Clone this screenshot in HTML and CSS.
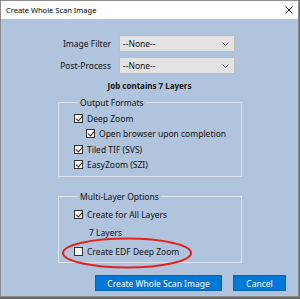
FILE: index.html
```html
<!DOCTYPE html>
<html>
<head>
<meta charset="utf-8">
<link rel="stylesheet" href="styles.css">
</head>
<body>
<div class="window">
  <div class="titlebar">
    <span class="title">Create Whole Scan Image</span>
    <svg class="close" width="8" height="8" viewBox="0 0 8 8"><path d="M0.5 0.5 L7.5 7.5 M7.5 0.5 L0.5 7.5" stroke="#222" stroke-width="1"/></svg>
  </div>
  <div class="content">
    <div class="form">
      <label class="lbl">Image Filter</label>
      <div class="select"><span>--None--</span><svg width="7" height="4" viewBox="0 0 7 4"><path d="M0.5 0.5 L3.5 3.5 L6.5 0.5" fill="none" stroke="#666" stroke-width="1"/></svg></div>
      <label class="lbl">Post-Process</label>
      <div class="select"><span>--None--</span><svg width="7" height="4" viewBox="0 0 7 4"><path d="M0.5 0.5 L3.5 3.5 L6.5 0.5" fill="none" stroke="#666" stroke-width="1"/></svg></div>
    </div>
    <div class="job">Job contains 7 Layers</div>
    <fieldset class="group g1">
      <legend>Output Formats</legend>
      <div class="check"><span class="box on"></span>Deep Zoom</div>
      <div class="check sub"><span class="box on"></span>Open browser upon completion</div>
      <div class="check"><span class="box on"></span>Tiled TIF (SVS)</div>
      <div class="check"><span class="box on"></span>EasyZoom (SZI)</div>
    </fieldset>
    <fieldset class="group g2">
      <legend>Multi-Layer Options</legend>
      <div class="check tall"><span class="box on"></span>Create for All Layers</div>
      <div class="layers">7 Layers</div>
      <div class="check tall"><span class="box"></span>Create EDF Deep Zoom</div>
    </fieldset>
    <div class="buttons">
      <div class="btn primary">Create Whole Scan Image</div>
      <div class="btn cancel">Cancel</div>
    </div>
    <svg class="ring" width="134" height="34" viewBox="0 0 134 34"><ellipse cx="67" cy="17" rx="64" ry="14.5" fill="none" stroke="#e3201b" stroke-width="2"/></svg>
  </div>
</div>
</body>
</html>
```
FILE: styles.css
```css
* { box-sizing: border-box; }
html, body { margin: 0; padding: 0; }
body {
  width: 300px; height: 299px;
  background: #6b6b6b;
  font-family: "Noto Sans", "Open Sans", sans-serif;
  font-size: 8.5px;
  color: #111;
  overflow: hidden;
}
.window {
  width: 299px; height: 297px;
  border: 1px solid #8c8c8c;
  background: #b0c4de;
  display: flex; flex-direction: column;
}
.titlebar {
  height: 18px; background: #fff;
  display: flex; align-items: center; justify-content: space-between;
  padding: 0 5px 0 5px;
  flex-shrink: 0;
}
.title { font-size: 7.5px; color: #000; }
.form {
  display: grid;
  grid-template-columns: 103px 116px;
  column-gap: 8px; row-gap: 5px;
  margin: 16px 0 0 7px;
  align-items: center;
}
.content { position: relative; flex: 1; display: flex; flex-direction: column; }
.lbl { text-align: right; font-size: 8.5px; }
.select {
  height: 17px;
  background: #e3e3e3;
  border: 1px solid #bdbdbd;
  display: flex; align-items: center; justify-content: space-between;
  padding: 0 5px 0 3px;
  font-size: 8.5px;
}
.job { text-align: center; font-weight: bold; margin-top: 5px; height: 13px; line-height: 13px; font-size: 8px; }
.group {
  margin: 0 0 0 57px; width: 184px;
  border: 1px solid #dbe3ee;
  padding: 0 0 0 15px;
}
.group legend { padding: 0 2px; margin-left: 4px; font-size: 8.5px; line-height: 11px; }
.g1 { margin-top: 5px; height: 80px; padding-top: 3px; }
.g2 { margin-top: 14px; height: 72px; padding-top: 4px; }
.check { display: flex; align-items: center; height: 15.3px; font-size: 8.5px; }
.check.tall { height: 17px; }
.check.sub { padding-left: 12px; }
.box {
  width: 9px; height: 9px; border: 1px solid #333; background: #fff;
  margin-right: 4px; position: relative; flex-shrink: 0;
}
.box.on::after {
  content: ""; position: absolute; left: 2px; top: 0px;
  width: 3px; height: 5px;
  border: solid #222; border-width: 0 1px 1px 0;
  transform: rotate(40deg);
}
.layers { height: 20px; line-height: 20px; padding-left: 15px; font-size: 8.5px; }
.buttons {
  display: flex; gap: 11px; margin: 12px 0 0 94px;
}
.btn {
  height: 16px; background: #0078d7; color: #fff;
  border: 1px solid #0a62b8;
  display: flex; align-items: center; justify-content: center;
  font-size: 8.5px;
}
.primary { width: 127px; }
.cancel { width: 53px; }
.ring { position: absolute; left: 59px; top: 217px; }
```
